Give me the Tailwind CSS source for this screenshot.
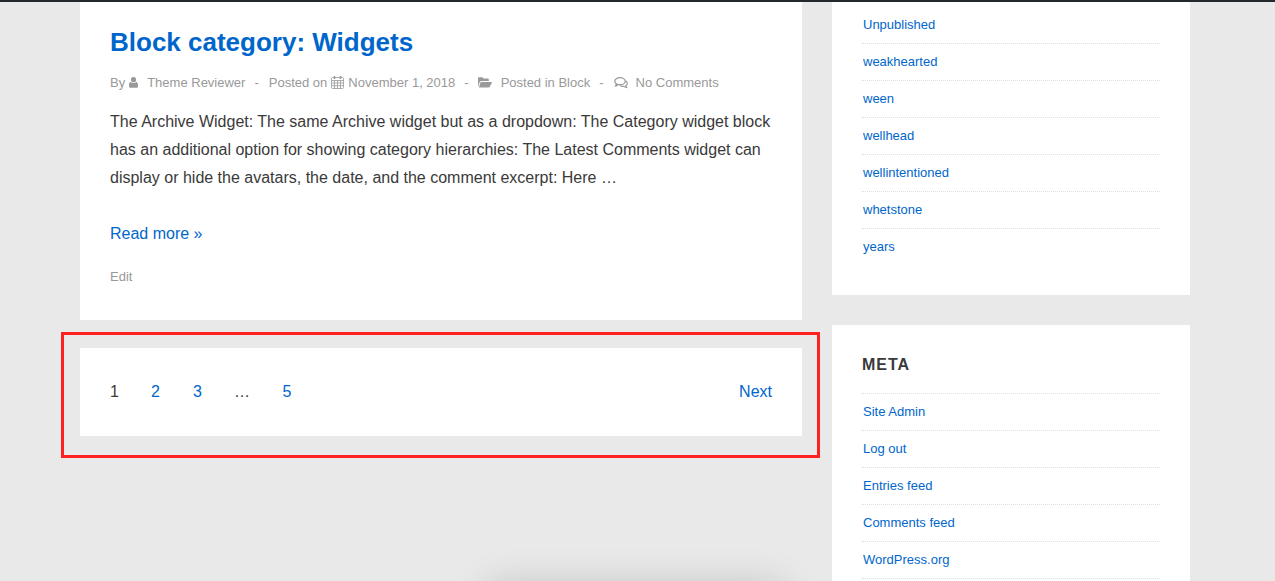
<!DOCTYPE html>
<html lang="en">

<head>
    <meta charset="UTF-8">
    <title>Block category: Widgets</title>
    <script src="https://cdn.jsdelivr.net/npm/@tailwindcss/browser@4"></script>
</head>

<body class="relative h-[581px] overflow-hidden bg-[#e9e9e9] font-['Liberation_Sans',Arial,sans-serif] text-[#3a3a3a]">
    <div class="h-[2px] bg-[#23282d]"></div>

    <div class="flex gap-[30px] pl-[80px]">
        <!-- main column -->
        <main class="w-[722px] shrink-0">
            <article class="h-[318px] bg-white px-[30px] pt-[23px]">
                <h2 class="text-[26px] leading-[34px] font-bold text-[#0066cc]">Block category: Widgets</h2>
                <div class="mt-[14px] flex h-[20px] items-center text-[13px] text-[#999]">
                    <span>By</span>
                    <svg class="ml-[4px] h-[11px] w-[9px] -translate-y-[1px]" viewBox="0 0 9 11" fill="#999"><circle cx="4.500" cy="2.700" r="2.600"/><path d="M1.600 5c.8.800 1.800 1.100 2.900 1.100S6.600 5.800 7.400 5C8.500 5.200 9 6.600 9 8.300v1c0 .9-.6 1.500-1.400 1.500H1.400C.6 10.800 0 10.200 0 9.300v-1C0 6.600.5 5.200 1.600 5z"/></svg>
                    <span class="ml-[9px]">Theme Reviewer</span>
                    <span class="ml-[9px]">-</span>
                    <span class="ml-[10px]">Posted on</span>
                    <svg class="ml-[4px] h-[13px] w-[13px] -translate-y-[1px]" viewBox="0 0 13 13" fill="none" stroke="#aaa" stroke-width="1"><rect x="0.500" y="1.500" width="12" height="11" rx="1"/><path d="M0.500 4.500h12M0.500 7h12M0.500 9.700h12M3.500 4.500v8M6.500 4.500v8M9.500 4.500v8"/><path d="M3.500 0v3M9.500 0v3" stroke="#999" stroke-width="1.500"/></svg>
                    <span class="ml-[4px]">November 1, 2018</span>
                    <span class="ml-[9px]">-</span>
                    <svg class="ml-[9px] h-[12px] w-[14px]" viewBox="0 0 14 12" fill="#999"><path d="M0 10V1.500C0 .8.500.300 1.200.300h3.100l1.200 1.300h4.200c.6 0 1.100.5 1.100 1.100V4H3.500C2.700 4 2.100 4.400 1.700 5zM2.400 5.500c.3-.4.700-.6 1.200-.6H13c.8 0 1.200.8.700 1.400L11.500 10c-.3.400-.7.600-1.200.6H1z"/></svg>
                    <span class="ml-[9px]">Posted in Block</span>
                    <span class="ml-[9px]">-</span>
                    <svg class="ml-[10px] h-[12px] w-[14px]" viewBox="0 0 14 12" fill="none" stroke="#999" stroke-width="1.200"><ellipse cx="6" cy="4.200" rx="5.200" ry="3.500"/><path d="M2.500 7c-.2.800-.6 1.300-1 1.800c1 0 1.900-.4 2.500-1M11.600 3.800c1 .7 1.700 1.500 1.700 2.600c0 1-.6 1.800-1.500 2.400c.1.700.5 1.200.9 1.700c-1.200-.1-2.200-.5-2.900-1.100c-1.500.2-3-.2-4-1"/></svg>
                    <span class="ml-[8px]">No Comments</span>
                </div>
                <p class="mt-[15px] w-[670px] text-[16px] leading-[28px]">The Archive Widget: The same Archive widget but as a dropdown: The Category widget block has an additional option for showing category hierarchies: The Latest Comments widget can display or hide the avatars, the date, and the comment excerpt: Here …</p>
                <a href="#" class="mt-[28px] block text-[16px] leading-[28px] text-[#0066cc]">Read more »</a>
                <a href="#" class="mt-[19px] block text-[13px] leading-[20px] text-[#999]">Edit</a>
            </article>

            <nav class="mt-[28px] flex h-[88px] items-center justify-between bg-white px-[30px] text-[16px]">
                <div class="flex">
                    <span class="w-[41px]">1</span>
                    <a href="#" class="w-[42px] text-[#0066cc]">2</a>
                    <a href="#" class="w-[41px] text-[#0066cc]">3</a>
                    <span class="w-[48.5px]">…</span>
                    <a href="#" class="text-[#0066cc]">5</a>
                </div>
                <a href="#" class="text-[#0066cc]">Next</a>
            </nav>
        </main>

        <!-- sidebar -->
        <aside class="w-[358px] shrink-0">
            <section class="h-[293px] bg-white px-[30px] pt-[5px]">
                <ul class="text-[13px] text-[#0066cc]">
                    <li class="h-[37px] border-b border-dotted border-[#e0e0e0] pt-[9px] pl-px leading-[18px]">Unpublished</li>
                    <li class="h-[37px] border-b border-dotted border-[#e0e0e0] pt-[9px] pl-px leading-[18px]">weakhearted</li>
                    <li class="h-[37px] border-b border-dotted border-[#e0e0e0] pt-[9px] pl-px leading-[18px]">ween</li>
                    <li class="h-[37px] border-b border-dotted border-[#e0e0e0] pt-[9px] pl-px leading-[18px]">wellhead</li>
                    <li class="h-[37px] border-b border-dotted border-[#e0e0e0] pt-[9px] pl-px leading-[18px]">wellintentioned</li>
                    <li class="h-[37px] border-b border-dotted border-[#e0e0e0] pt-[9px] pl-px leading-[18px]">whetstone</li>
                    <li class="h-[37px] pt-[9px] pl-px leading-[18px]">years</li>
                </ul>
            </section>

            <section class="mt-[30px] h-[300px] bg-white px-[30px] pt-[30px]">
                <h3 class="border-b border-dotted border-[#e0e0e0] pb-[18px] text-[16px] leading-[20px] font-bold tracking-[1px]">META</h3>
                <ul class="text-[13px] text-[#0066cc]">
                    <li class="h-[37px] border-b border-dotted border-[#e0e0e0] pt-[9px] pl-px leading-[18px]">Site Admin</li>
                    <li class="h-[37px] border-b border-dotted border-[#e0e0e0] pt-[9px] pl-px leading-[18px]">Log out</li>
                    <li class="h-[37px] border-b border-dotted border-[#e0e0e0] pt-[9px] pl-px leading-[18px]">Entries feed</li>
                    <li class="h-[37px] border-b border-dotted border-[#e0e0e0] pt-[9px] pl-px leading-[18px]">Comments feed</li>
                    <li class="h-[37px] border-b border-dotted border-[#e0e0e0] pt-[9px] pl-px leading-[18px]">WordPress.org</li>
                </ul>
            </section>
        </aside>
    </div>

    <!-- red highlight over the pagination -->
    <div class="absolute top-[332px] left-[61px] h-[126px] w-[759px] border-[3px] border-[#ff2020]"></div>
    <!-- soft shadow from something below the fold -->
    <div class="absolute top-[600px] left-[500px] h-[40px] w-[270px] shadow-[0_0_40px_12px_rgba(0,0,0,0.2)]"></div>
</body>

</html>
